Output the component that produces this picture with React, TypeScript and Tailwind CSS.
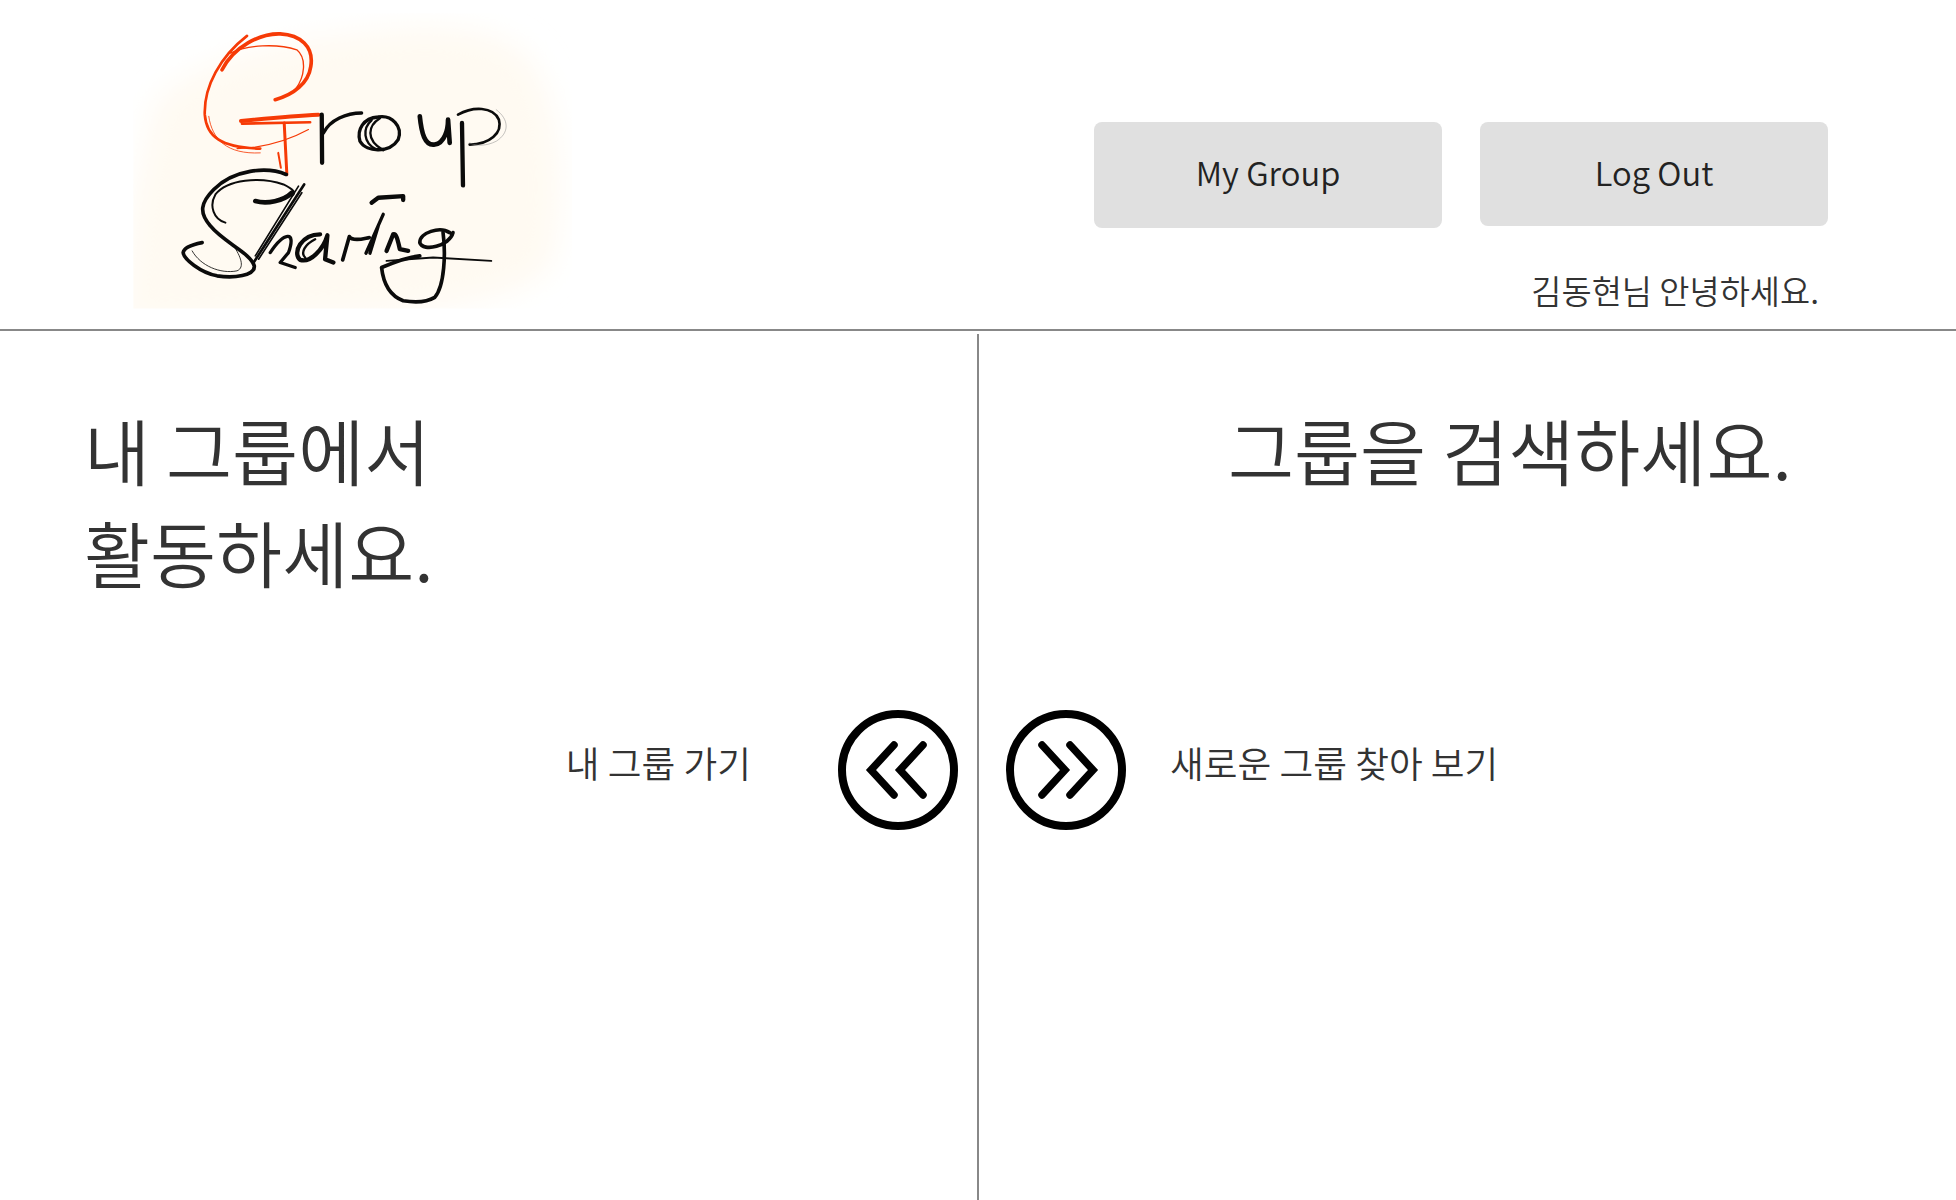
const FONT = "font-['Noto_Sans_CJK_KR','Noto_Sans',sans-serif]";

// handwritten logo, drawn in a 1380x990 box (3x of the pixels it covers)
function Logo() {
  return (
    <svg viewBox="0 0 1380 990" className="h-[329px] w-[460px] shrink-0" role="img" aria-label="Group Sharing">
      <defs>
        <filter id="paper" x="-15%" y="-15%" width="130%" height="130%">
          <feGaussianBlur stdDeviation="45" />
        </filter>
        <clipPath id="paperClip">
          <rect x="38" y="40" width="1320" height="888" />
        </clipPath>
      </defs>
      <g clipPath="url(#paperClip)">
        <path
          d="M90 340 C140 220 380 130 780 90 C950 70 1170 80 1240 190 C1330 320 1340 600 1300 780 C1280 880 1000 940 700 950 L0 980 L40 600 Z"
          fill="#fffaf2"
          filter="url(#paper)"
        />
      </g>
      <g fill="none" stroke="#f63a06" strokeLinecap="round" strokeLinejoin="round">
        <path strokeWidth="11" d="M305 210 C340 140 420 100 480 102 C540 105 582 140 572 200 C565 250 520 285 465 300" />
        <path strokeWidth="4" d="M330 160 C380 135 470 130 530 150 C560 175 555 230 525 270" />
        <path strokeWidth="8" d="M380 108 C300 170 250 260 253 345 C258 410 300 445 420 447" />
        <path strokeWidth="2.5" d="M265 350 C275 420 320 465 420 460" />
        <path strokeWidth="12" d="M362 364 C420 358 520 348 595 345" />
        <path strokeWidth="8" d="M365 372 L570 368" />
        <path strokeWidth="3.5" d="M565 390 C510 420 440 445 350 447" />
        <path strokeWidth="9" d="M492 370 L500 525" />
        <path strokeWidth="6" d="M474 460 L482 505" />
      </g>
      <g fill="none" stroke="#0b0b0b" strokeLinecap="round" strokeLinejoin="round">
        <path strokeWidth="13" d="M605 345 L606 490" />
        <path strokeWidth="10" d="M610 400 C630 360 680 340 725 340" />
        <path strokeWidth="10" d="M775 352 C730 355 710 390 720 425 C740 460 810 460 835 420 C850 380 815 345 775 352" />
        <path strokeWidth="7" d="M755 362 C728 385 728 430 770 450 M780 356 C745 378 735 420 790 452" />
        <path strokeWidth="14" d="M900 350 C905 400 915 440 945 435 C975 430 985 390 985 360 L990 430" />
        <path strokeWidth="13" d="M1027 370 L1030 558" />
        <path strokeWidth="8" d="M1015 345 C1060 320 1120 320 1138 360 C1150 400 1110 435 1050 435" />
        <path strokeWidth="1.5" stroke="#888888" d="M1130 330 C1170 360 1170 400 1130 425 C1100 440 1070 440 1050 430" />
        <path strokeWidth="11" d="M498 525 C440 500 340 510 280 570 C240 610 235 640 270 680 C310 730 390 760 402 800 C405 830 340 838 290 830 C240 820 190 780 188 760 C190 745 220 735 245 730" />
        <path strokeWidth="6" d="M315 670 C280 660 265 620 285 585 C320 540 420 530 490 555 C520 570 530 580 515 590" />
        <path strokeWidth="2.5" d="M215 755 C240 800 300 825 350 815 C375 805 360 770 340 740" />
        <path strokeWidth="14" d="M405 605 C440 615 490 605 515 580" />
        <path strokeWidth="8" d="M552 555 L400 790" />
        <path strokeWidth="5" d="M535 560 L405 770 M545 580 L415 780" />
        <path strokeWidth="10" d="M450 760 C490 700 530 690 505 760 L480 790 L525 805" />
        <path strokeWidth="13" d="M600 705 C545 705 515 760 540 782 C570 792 610 750 622 708 L615 780 L640 790" />
        <path strokeWidth="7" d="M585 720 C555 735 540 760 555 775" />
        <path strokeWidth="11" d="M668 782 L688 712 C700 730 740 715 748 715" />
        <path strokeWidth="10" d="M790 645 L738 762 M775 680 L750 762" />
        <path strokeWidth="13" d="M755 610 L775 595 L850 590 L850 602" />
        <path strokeWidth="13" d="M800 755 L820 705 C830 700 835 730 840 750 L865 755" />
        <path strokeWidth="11" d="M990 700 C960 680 900 700 900 730 C910 760 990 740 1000 700" />
        <path strokeWidth="11" d="M970 700 C978 760 975 860 945 895 C920 910 880 910 850 905 C810 890 790 850 785 805 C820 790 860 775 900 770" />
        <path strokeWidth="6" d="M800 785 L940 775 L1115 785" />
      </g>
    </svg>
  );
}

function CircleArrows({ dir }: { dir: 'left' | 'right' }) {
  return (
    <svg viewBox="0 0 120 120" className="h-[120px] w-[120px] shrink-0 fill-none stroke-black" strokeLinecap="round" strokeLinejoin="miter">
      <circle cx="60" cy="60" r="56" strokeWidth="8" />
      {dir === 'left' ? (
        <path strokeWidth="7.5" d="M56 35 L33 60 L56 85 M85 35 L62 60 L85 85" />
      ) : (
        <path strokeWidth="7.5" d="M36 35 L59 60 L36 85 M64 35 L87 60 L64 85" />
      )}
    </svg>
  );
}

export default function App() {
  return (
    <div className={`h-[1200px] w-[1956px] overflow-hidden bg-white ${FONT}`}>
      <header className="flex h-[331px] justify-between border-b-2 border-[#888888] pl-[120px] pr-[128px]">
        <Logo />
        <div className="flex flex-col items-end pt-[122px]">
          <div className="flex items-start gap-[38px]">
            <button className="flex h-[106px] w-[348px] items-center justify-center rounded-lg bg-[#e0e0e0] pb-[6px] text-[32.8px] font-[350] text-[#222222]">
              My Group
            </button>
            <button className="flex h-[104px] w-[348px] items-center justify-center rounded-lg bg-[#e0e0e0] pb-[4px] text-[32.8px] font-[350] text-[#222222]">
              Log Out
            </button>
          </div>
          <p className="mt-[38px] pr-[9px] text-[32.8px] leading-[48px] font-[350] text-[#333333]">김동현님 안녕하세요.</p>
        </div>
      </header>

      <main className="mt-[3px] flex h-[866px]">
        <section className="w-[977px] pt-[64px]">
          <h2 className="pl-[84px] text-[71.8px] leading-[102px] font-[350] text-[#333333]">
            내 그룹에서
            <br />
            활동하세요.
          </h2>
          <div className="mt-[108px] flex items-center justify-end gap-[87px] pr-[19px]">
            <span className="pb-[14px] text-[36.7px] font-[350] text-[#333333]">내 그룹 가기</span>
            <CircleArrows dir="left" />
          </div>
        </section>

        <div className="w-[2px] bg-[#888888]" />

        <section className="flex-1 pt-[64px]">
          <h2 className="pl-[249px] text-[71.8px] leading-[102px] font-[350] text-[#333333]">그룹을 검색하세요.</h2>
          <div className="mt-[210px] flex items-center gap-[44px] pl-[27px]">
            <CircleArrows dir="right" />
            <span className="pb-[14px] text-[36.7px] font-[350] text-[#333333]">새로운 그룹 찾아 보기</span>
          </div>
        </section>
      </main>
    </div>
  );
}
